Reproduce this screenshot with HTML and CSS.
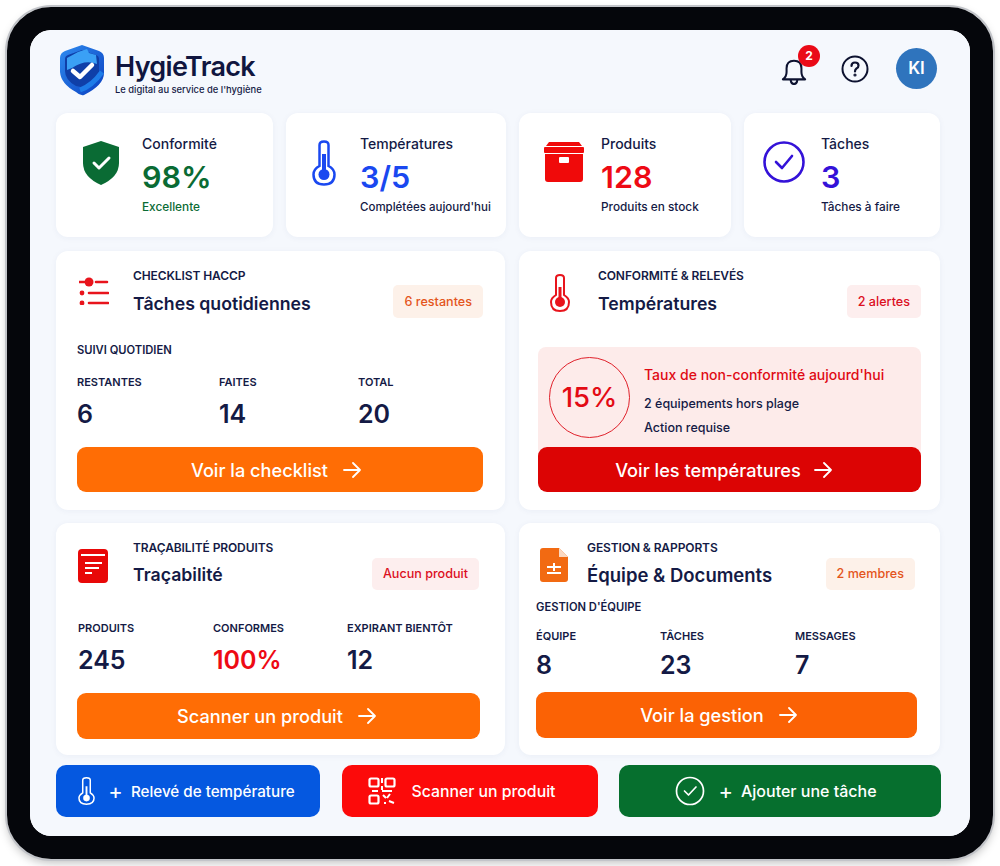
FILE: index.html
```html
<!DOCTYPE html>
<html lang="fr">
<head>
	<meta charset="UTF-8" />
	<title>HygieTrack</title>
	<link rel="stylesheet" href="styles.css">
</head>
<body>
	<div class="device">
		<div class="screen">
			<header class="top">
				<div class="brand">
					<svg class="logo" viewBox="0 0 44 52">
						<defs>
							<linearGradient id="lg" x1="0" y1="0" x2="1" y2="1">
								<stop offset="0" stop-color="#2f8cf0"/>
								<stop offset="1" stop-color="#0a3fc0"/>
							</linearGradient>
						</defs>
						<path d="M22 1 L39 7 Q44 9 44 14 V29 Q44 41 24 51 Q20 52 16 48 Q1 40 0 28 V14 Q0 9 5 7 Z" fill="url(#lg)"/>
						<path d="M22 6 L36 11 Q39 12 39 15 V28 Q39 37 26 44 L16 42 Q5 36 5 27 V15 Q5 12 8 11 Z" fill="#0f3fa8"/>
						<path d="M18 8 L27 5 L29 9 L36 11 L37 20 Q25 15 12 24 L7 26 V14 Z" fill="#3aa0f5"/>
						<path d="M13 27 L20 33 L32 21" fill="none" stroke="#fff" stroke-width="4.500" stroke-linecap="round" stroke-linejoin="round"/>
						<path d="M20 46 Q32 42 42 28" fill="none" stroke="#1e7ce8" stroke-width="5"/>
					</svg>
					<div>
						<div class="brand-name">HygieTrack</div>
						<div class="brand-tag">Le digital au service de l'hygiène</div>
					</div>
				</div>
				<div class="top-actions">
					<div class="bell">
						<svg width="26" height="28" viewBox="0 0 28 30" fill="none" stroke="#0d1230" stroke-width="2.200" stroke-linejoin="round" stroke-linecap="round">
							<path d="M2 24 Q6 21 6 16 V12 Q6 4 14 4 Q22 4 22 12 V16 Q22 21 26 24 Z"/>
							<path d="M10.500 25 Q11 29 14 29 Q17 29 17.500 25"/>
						</svg>
						<span class="bell-count">2</span>
					</div>
					<svg width="28" height="28" viewBox="0 0 28 28" fill="none" stroke="#0d1230" stroke-width="2" stroke-linecap="round">
						<circle cx="14" cy="14" r="12.500"/>
						<path d="M10.500 11 Q10.500 7.500 14 7.500 Q17.500 7.500 17.500 10.500 Q17.500 12.500 15.500 13.500 Q14 14.500 14 16.500" stroke-width="2.200"/>
						<circle cx="14" cy="20" r="0.600" fill="#0d1230"/>
					</svg>
					<div class="avatar">KI</div>
				</div>
			</header>

			<section class="stats">
				<div class="stat">
					<svg class="stat-icon" width="38" height="44" viewBox="0 0 38 44">
						<path d="M19 0 L37 6 V22 Q37 36 19 44 Q1 36 1 22 V6 Z" fill="#0a6b34"/>
						<path d="M12 22 L17 27 L27 17" fill="none" stroke="#fff" stroke-width="3" stroke-linecap="round" stroke-linejoin="round"/>
					</svg>
					<div>
						<div class="stat-label">Conformité</div>
						<div class="stat-value green">98%</div>
						<div class="stat-sub green">Excellente</div>
					</div>
				</div>
				<div class="stat stat-temp">
					<svg class="stat-icon" width="24" height="46" viewBox="0 0 24 46" fill="none" stroke="#1a48f0" stroke-width="2.500">
						<path d="M7.500 5 Q7.500 1.500 12 1.500 Q16.500 1.500 16.500 5 V26 Q22.500 29 22.500 34.500 Q22.500 44.500 12 44.500 Q1.500 44.500 1.500 34.500 Q1.500 29 7.500 26 Z"/>
						<circle cx="12" cy="34.500" r="5.500" fill="#1a48f0" stroke="none"/>
						<path d="M12 14 V32" stroke-width="4"/>
					</svg>
					<div>
						<div class="stat-label">Températures</div>
						<div class="stat-value blue">3/5</div>
						<div class="stat-sub">Complétées aujourd'hui</div>
					</div>
				</div>
				<div class="stat stat-box">
					<svg class="stat-icon" width="40" height="42" viewBox="0 0 40 42">
						<path d="M5 1 H35 L38 5 H2 Z" fill="#f00a0a"/>
						<rect y="6" width="40" height="6" rx="1" fill="#f00a0a"/>
						<path d="M1 13 H39 V38 Q39 41 36 41 H4 Q1 41 1 38 Z" fill="#f00a0a"/>
						<rect x="15" y="16" width="10" height="6" rx="1" fill="#fff"/>
					</svg>
					<div>
						<div class="stat-label">Produits</div>
						<div class="stat-value red">128</div>
						<div class="stat-sub">Produits en stock</div>
					</div>
				</div>
				<div class="stat stat-task">
					<svg class="stat-icon" width="42" height="42" viewBox="0 0 42 42" fill="none" stroke="#3412d8" stroke-width="2.600" stroke-linecap="round" stroke-linejoin="round">
						<circle cx="21" cy="21" r="19.500"/>
						<path d="M13 21 L19 27 L29 15"/>
					</svg>
					<div>
						<div class="stat-label">Tâches</div>
						<div class="stat-value purple">3</div>
						<div class="stat-sub">Tâches à faire</div>
					</div>
				</div>
			</section>

			<section class="cards">
				<article class="card card-checklist">
					<div class="card-head">
						<svg class="card-icon" width="30" height="30" viewBox="0 0 30 30" fill="none" stroke="#e8141c" stroke-width="2.600" stroke-linecap="round">
							<path d="M0.500 7 H5 M17 7 H28 M10 18 H29 M10 28 H29"/>
							<circle cx="10" cy="7" r="4.500" fill="#e8141c" stroke="none"/>
							<circle cx="3" cy="18" r="2.400" fill="#e8141c" stroke="none"/>
							<circle cx="3" cy="28" r="2.400" fill="#e8141c" stroke="none"/>
						</svg>
						<div class="card-titles">
							<div class="eyebrow">CHECKLIST HACCP</div>
							<h2>Tâches quotidiennes</h2>
						</div>
						<span class="badge badge-orange">6 restantes</span>
					</div>
					<div class="section-label">SUIVI QUOTIDIEN</div>
					<div class="figures fig-checklist">
						<div><div class="fig-label">RESTANTES</div><div class="fig-value">6</div></div>
						<div><div class="fig-label">FAITES</div><div class="fig-value">14</div></div>
						<div><div class="fig-label">TOTAL</div><div class="fig-value">20</div></div>
					</div>
					<a class="cta cta-orange">Voir la checklist
						<svg class="arrow" width="18" height="16" viewBox="0 0 18 16"><path d="M1 8 H17 M10 1 L17 8 L10 15"/></svg>
					</a>
				</article>

				<article class="card card-temp">
					<div class="card-head">
						<svg class="card-icon" width="20" height="38" viewBox="0 0 20 38" fill="none" stroke="#e8141c" stroke-width="2">
							<path d="M6 4 Q6 1 10 1 Q14 1 14 4 V21 Q19 24 19 28 Q19 37 10 37 Q1 37 1 28 Q1 24 6 21 Z"/>
							<circle cx="10" cy="28" r="5" fill="#e8141c" stroke="none"/>
							<path d="M10 13 V26" stroke-width="3"/>
						</svg>
						<div class="card-titles">
							<div class="eyebrow">CONFORMITÉ &amp; RELEVÉS</div>
							<h2>Températures</h2>
						</div>
						<span class="badge badge-red">2 alertes</span>
					</div>
					<div class="alert">
						<div class="alert-ring">15%</div>
						<div>
							<div class="alert-title">Taux de non-conformité aujourd'hui</div>
							<div class="alert-line">2 équipements hors plage</div>
							<div class="alert-line">Action requise</div>
						</div>
					</div>
					<a class="cta cta-red">Voir les températures
						<svg class="arrow" width="18" height="16" viewBox="0 0 18 16"><path d="M1 8 H17 M10 1 L17 8 L10 15"/></svg>
					</a>
				</article>

				<article class="card card-trace">
					<div class="card-head">
						<svg class="card-icon" width="30" height="34" viewBox="0 0 30 34">
							<rect width="30" height="34" rx="4" fill="#e80808"/>
							<path d="M3 6 H27 M7 14 H24 M7 19 H21 M7 24 H14" stroke="#fff" stroke-width="1.800" fill="none"/>
						</svg>
						<div class="card-titles">
							<div class="eyebrow">TRAÇABILITÉ PRODUITS</div>
							<h2>Traçabilité</h2>
						</div>
						<span class="badge badge-red">Aucun produit</span>
					</div>
					<div class="figures fig-trace">
						<div><div class="fig-label">PRODUITS</div><div class="fig-value">245</div></div>
						<div><div class="fig-label">CONFORMES</div><div class="fig-value red">100%</div></div>
						<div><div class="fig-label">EXPIRANT BIENTÔT</div><div class="fig-value">12</div></div>
					</div>
					<a class="cta cta-orange">Scanner un produit
						<svg class="arrow" width="18" height="16" viewBox="0 0 18 16"><path d="M1 8 H17 M10 1 L17 8 L10 15"/></svg>
					</a>
				</article>

				<article class="card card-team">
					<div class="card-head">
						<svg class="card-icon" width="28" height="34" viewBox="0 0 28 34">
							<path d="M3 0 H19 L28 9 V31 Q28 34 25 34 H3 Q0 34 0 31 V3 Q0 0 3 0 Z" fill="#f26a12"/>
							<path d="M19 0 L28 9 H19 Z" fill="#fbd9c2"/>
							<path d="M7 19 H21 M14 15 V23 M7 25 H21" stroke="#fff" stroke-width="2" fill="none"/>
						</svg>
						<div class="card-titles">
							<div class="eyebrow">GESTION &amp; RAPPORTS</div>
							<h2>Équipe &amp; Documents</h2>
						</div>
						<span class="badge badge-orange">2 membres</span>
					</div>
					<div class="section-label">GESTION D'ÉQUIPE</div>
					<div class="figures fig-team">
						<div><div class="fig-label">ÉQUIPE</div><div class="fig-value">8</div></div>
						<div><div class="fig-label">TÂCHES</div><div class="fig-value">23</div></div>
						<div><div class="fig-label">MESSAGES</div><div class="fig-value">7</div></div>
					</div>
					<a class="cta cta-orange2">Voir la gestion
						<svg class="arrow" width="18" height="16" viewBox="0 0 18 16"><path d="M1 8 H17 M10 1 L17 8 L10 15"/></svg>
					</a>
				</article>
			</section>

			<section class="quick">
				<a class="quick-btn q-blue">
					<svg width="17" height="30" viewBox="0 0 18 30" fill="none" stroke="#fff" stroke-width="1.600">
						<path d="M5 3.500 Q5 1 9 1 Q13 1 13 3.500 V17 Q17 19.500 17 22.500 Q17 29 9 29 Q1 29 1 22.500 Q1 19.500 5 17 Z"/>
						<circle cx="9" cy="22.500" r="3.500" fill="#fff" stroke="none"/>
						<path d="M9 10 V21" stroke-width="2"/>
					</svg>
					<span class="plus">+</span>
					<span>Relevé de température</span>
				</a>
				<a class="quick-btn q-red">
					<svg width="28" height="28" viewBox="0 0 28 28" fill="none" stroke="#fff" stroke-width="2.200">
						<rect x="1.500" y="1.500" width="9" height="8" rx="1.500"/>
						<rect x="17.500" y="1.500" width="9" height="8" rx="1.500"/>
						<rect x="1.500" y="18.500" width="9" height="8" rx="1.500"/>
						<path d="M14 1 V6 M14 9 V13 M4 14 H10 M14 14 H24 M15 18 L18 21 M22 17 L19 21 M17 25 V27 M21 24 L26 26" stroke-width="2"/>
					</svg>
					<span>Scanner un produit</span>
				</a>
				<a class="quick-btn q-green">
					<svg width="30" height="30" viewBox="0 0 30 30" fill="none" stroke="#fff" stroke-width="1.700" stroke-linecap="round" stroke-linejoin="round">
						<circle cx="15" cy="15" r="13.500"/>
						<path d="M9.500 15 L13.500 19 L21 11"/>
					</svg>
					<span class="plus">+</span>
					<span>Ajouter une tâche</span>
				</a>
			</section>
		</div>
	</div>
</body>
</html>
```

FILE: styles.css
```css
* { box-sizing: border-box; }
body {
	margin: 0;
	background: #fff;
	font-family: Inter, "Noto Sans", sans-serif;
	color: #141a45;
}
.device {
	width: 986px;
	height: 852px;
	margin: 7px;
	border: 23px solid #05060b;
	border-radius: 44px;
	box-shadow: 0 0 0 2px #c2c4c9, 0 4px 10px rgba(0,0,0,.25);
	overflow: hidden;
}
.screen {
	height: 100%;
	padding: 14px 29px 0 26px;
	background: #f5f8fd;
	border-radius: 20px;
}

/* header */
.top {
	display: flex;
	justify-content: space-between;
	align-items: flex-start;
	height: 69px;
}
.brand { display: flex; gap: 11px; }
.logo { width: 44px; height: 52px; margin-left: 4px; }
.brand-name {
	margin-top: 6px;
	font-size: 27px;
	line-height: 33px;
	font-weight: 600;
	letter-spacing: -0.7px;
	color: #10163f;
}
.brand-tag {
	font-size: 9.400px;
	line-height: 12px;
	font-weight: 500;
	margin-top: 1px;
}
.top-actions {
	display: flex;
	align-items: center;
	gap: 19px;
	margin: 4px 4px 0 0;
}
.bell { position: relative; width: 34px; height: 32px; margin-right: 7px; padding-top: 4px; }
.bell-count {
	position: absolute;
	top: -8px;
	left: 17px;
	width: 22px;
	height: 22px;
	border-radius: 50%;
	background: #ea0a17;
	color: #fff;
	font-size: 12px;
	font-weight: 700;
	line-height: 22px;
	text-align: center;
}
.avatar {
	width: 41px;
	height: 41px;
	border-radius: 50%;
	background: #2f74bd;
	color: #fff;
	font-size: 17px;
	font-weight: 600;
	line-height: 41px;
	text-align: center;
	margin-left: 8px;
}

/* stat cards */
.stats {
	display: grid;
	grid-template-columns: 217px 220px 212px 196px;
	gap: 13px;
	margin-bottom: 14px;
}
.stat {
	display: flex;
	height: 124px;
	padding: 22px 0 0 26px;
	background: #fff;
	border-radius: 12px;
	box-shadow: 0 1px 6px rgba(40,60,120,.05);
}
.stat-icon { flex: none; margin: 6px 22px 0 0; }
.stat-temp .stat-icon { margin: 5px 24px 0 0; }
.stat-box { padding-left: 25px; }
.stat-box .stat-icon { margin: 6px 17px 0 0; }
.stat-task { padding-left: 19px; }
.stat-task .stat-icon { margin: 6px 16px 0 0; }
.stat-label { font-size: 14px; line-height: 18px; font-weight: 500; }
.stat-value {
	font-size: 30.500px;
	line-height: 36px;
	font-weight: 600;
	margin-top: 6px;
}
.stat-sub { font-size: 11.800px; line-height: 16px; font-weight: 500; margin-top: 4px; }
.stat-temp .stat-sub { font-size: 11.500px; }
.green { color: #0a6b34; }
.blue { color: #1a48f0; }
.red { color: #ee0a14; }
.purple { color: #3412d8; }

/* main cards */
.cards {
	display: grid;
	grid-template-columns: 449px 421px;
	grid-template-rows: 259px 232px;
	gap: 13px 14px;
}
.card {
	padding: 17px 22px 0 21px;
	background: #fff;
	border-radius: 12px;
	box-shadow: 0 1px 6px rgba(40,60,120,.05);
	display: flex;
	flex-direction: column;
}
.card-head { display: flex; align-items: flex-start; height: 50px; }
.card-icon { flex: none; margin: 7px 0 0 2px; }
.card-titles { flex: 1; margin-left: 24px; }
.eyebrow { font-size: 12px; line-height: 16px; font-weight: 600; letter-spacing: -0.1px; }
h2 {
	margin: 7px 0 0;
	font-size: 17.700px;
	line-height: 26px;
	font-weight: 600;
}
.badge {
	margin-top: 17px;
	height: 33px;
	padding: 0 11px;
	border-radius: 5px;
	font-size: 12.600px;
	font-weight: 500;
	line-height: 33px;
}
.badge-orange { background: #fdf1e9; color: #e4551c; }
.badge-red { background: #fdeeee; color: #dc0f1e; }
.section-label { font-size: 11.200px; line-height: 14px; font-weight: 600; }
.figures { display: grid; }
.fig-label { font-size: 11px; line-height: 14px; font-weight: 600; }
.fig-value { font-size: 25px; line-height: 30px; font-weight: 600; margin-top: 10px; }
.cta {
	display: flex;
	align-items: center;
	justify-content: center;
	gap: 15px;
	height: 45px;
	padding-right: 8px;
	border-radius: 9px;
	color: #fff;
	font-size: 18.200px;
	font-weight: 500;
}
.arrow { fill: none; stroke: #fff; stroke-width: 1.800; stroke-linecap: round; stroke-linejoin: round; }
.cta-orange { background: #ff6d05; }
.cta-orange2 { background: #fb6205; }
.cta-red { background: #dc0404; }

.card-checklist .section-label { margin-top: 25px; }
.fig-checklist { grid-template-columns: 142px 139px 1fr; margin: 18px 0 18px; }

.card-temp { padding-left: 19px; padding-right: 19px; }
.card-temp .card-icon { margin: 6px 0 0 12px; }
.card-temp .card-titles { margin-left: 28px; }
.card-temp .cta { padding-right: 12px; gap: 13px; }
.alert {
	display: flex;
	gap: 14px;
	height: 110px;
	margin: 29px 0 -10px;
	padding: 10px 11px 0;
	background: #fdebea;
	border-radius: 8px;
}
.alert-ring {
	flex: none;
	width: 81px;
	height: 81px;
	border: 1.500px solid #e0202a;
	border-radius: 50%;
	color: #e30a14;
	font-size: 27.500px;
	font-weight: 500;
	line-height: 78px;
	text-align: center;
}
.alert-title { margin-top: 9px; font-size: 14px; line-height: 18px; font-weight: 500; color: #e00a14; }
.alert-line { margin-top: 7px; font-size: 12.500px; line-height: 17px; font-weight: 500; }
.alert-title + .alert-line { margin-top: 11px; }

.card-trace { padding-right: 25px; }
.card-trace h2, .card-team h2 { margin-top: 6px; }
.card-trace .card-icon { margin: 9px 0 0 1px; }
.card-trace .card-titles { margin-left: 25px; }
.card-trace .badge { margin-right: 1px; }
.card-trace .badge, .card-team .badge { margin-top: 18px; height: 32px; line-height: 32px; }
.card-trace .cta, .card-team .cta { height: 46px; }
.card-trace .cta { padding-right: 4px; }
.card-team .cta { padding-right: 16px; }
.fig-trace { grid-template-columns: 135px 134px 1fr; margin: 31px 0 18px 1px; }

.card-team { padding: 17px 23px 0 17px; }
.card-team .card-icon { margin: 8px 0 0 4px; }
.card-team .card-titles { margin-left: 19px; }
.card-team h2 { font-size: 18.500px; }
.card-team .badge { margin-right: 2px; }
.card-team .section-label { margin-top: 10px; }
.fig-team { grid-template-columns: 124px 135px 1fr; margin: 15px 0 12px; }
.fig-team .fig-value { margin-top: 7px; }

/* bottom actions */
.quick {
	display: grid;
	grid-template-columns: 264px 256px 322px;
	gap: 21.500px;
	margin-top: 10px;
}
.quick-btn {
	display: flex;
	align-items: center;
	justify-content: center;
	gap: 13px;
	height: 52px;
	border-radius: 10px;
	color: #fff;
	font-size: 16px;
	font-weight: 500;
}
.plus { font-size: 22px; font-weight: 400; margin-right: -5px; }
.q-blue { background: #0558e0; font-size: 15.200px; padding-right: 3px; }
.q-red { background: #fc0a0a; font-size: 15.800px; gap: 15px; padding-right: 15px; }
.q-green { background: #066f2e; padding-right: 8px; }
```
